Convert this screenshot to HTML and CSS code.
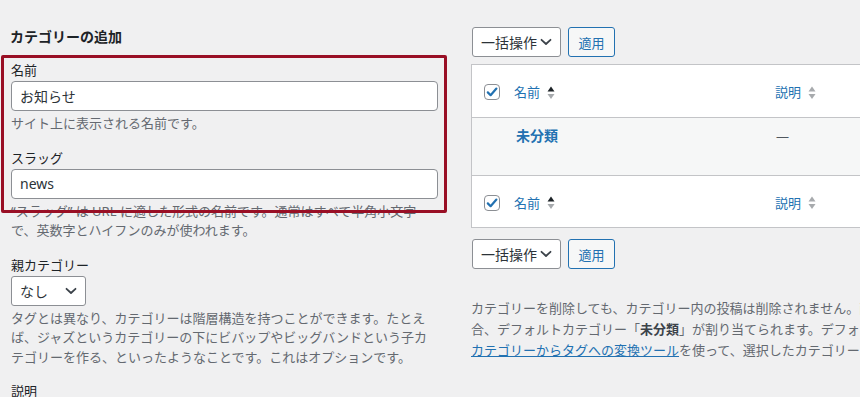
FILE: index.html
```html
<!DOCTYPE html>
<html lang="ja">
<head>
<meta charset="utf-8">
<title>カテゴリー</title>
<link rel="stylesheet" href="styles.css">
</head>
<body>
<div class="page">
  <div class="col-left">
    <h2 class="heading">カテゴリーの追加</h2>
    <div class="highlight-wrap">
      <div class="field">
        <label class="label">名前</label>
        <input class="text-input" type="text" value="お知らせ">
        <p class="help">サイト上に表示される名前です。</p>
      </div>
      <div class="field">
        <label class="label">スラッグ</label>
        <input class="text-input" type="text" value="news">
        <p class="help">“スラッグ” は URL に適した形式の名前です。通常はすべて半角小文字で、英数字とハイフンのみが使われます。</p>
      </div>
      <div class="highlight"></div>
    </div>
    <div class="field">
      <label class="label">親カテゴリー</label>
      <div class="select select-parent">
        <span>なし</span>
        <svg class="chev" width="12" height="8" viewBox="0 0 12 8"><path d="M1.5 1.8 L6 6 L10.5 1.8" fill="none" stroke="#3c434a" stroke-width="1.8" stroke-linecap="round" stroke-linejoin="round"/></svg>
      </div>
      <p class="help">タグとは異なり、カテゴリーは階層構造を持つことができます。たとえば、ジャズというカテゴリーの下にビバップやビッグバンドという子カテゴリーを作る、といったようなことです。これはオプションです。</p>
    </div>
    <div class="field">
      <label class="label">説明</label>
    </div>
  </div>

  <div class="col-right">
    <div class="bulk">
      <div class="select select-bulk">
        <span>一括操作</span>
        <svg class="chev" width="12" height="8" viewBox="0 0 12 8"><path d="M1.5 1.8 L6 6 L10.5 1.8" fill="none" stroke="#3c434a" stroke-width="1.8" stroke-linecap="round" stroke-linejoin="round"/></svg>
      </div>
      <button class="btn">適用</button>
    </div>

    <table class="list">
      <thead>
        <tr>
          <th class="c-check"><span class="cb"><svg width="14" height="14" viewBox="0 0 14 14"><path d="M2.8 7.4 L5.6 10.2 L11.4 3.6" fill="none" stroke="#2271b1" stroke-width="2.2" stroke-linecap="round" stroke-linejoin="round"/></svg></span></th>
          <th class="c-name"><span class="sort-link">名前<svg class="sort" width="8" height="14" viewBox="0 0 8 14"><path d="M0.5 5.5 L4 0.5 L7.5 5.5 Z" fill="#1d2327"/><path d="M0.5 8 L7.5 8 L4 13 Z" fill="#a7aaad"/></svg></span></th>
          <th class="c-desc"><span class="sort-link">説明<svg class="sort" width="8" height="14" viewBox="0 0 8 14"><path d="M0.5 5.5 L4 0.5 L7.5 5.5 Z" fill="#a7aaad"/><path d="M0.5 8 L7.5 8 L4 13 Z" fill="#a7aaad"/></svg></span></th>
        </tr>
      </thead>
      <tbody>
        <tr class="alt">
          <td class="c-check"></td>
          <td class="c-name"><a class="row-title">未分類</a></td>
          <td class="c-desc dash">—</td>
        </tr>
      </tbody>
      <tfoot>
        <tr>
          <th class="c-check"><span class="cb"><svg width="14" height="14" viewBox="0 0 14 14"><path d="M2.8 7.4 L5.6 10.2 L11.4 3.6" fill="none" stroke="#2271b1" stroke-width="2.2" stroke-linecap="round" stroke-linejoin="round"/></svg></span></th>
          <th class="c-name"><span class="sort-link">名前<svg class="sort" width="8" height="14" viewBox="0 0 8 14"><path d="M0.5 5.5 L4 0.5 L7.5 5.5 Z" fill="#1d2327"/><path d="M0.5 8 L7.5 8 L4 13 Z" fill="#a7aaad"/></svg></span></th>
          <th class="c-desc"><span class="sort-link">説明<svg class="sort" width="8" height="14" viewBox="0 0 8 14"><path d="M0.5 5.5 L4 0.5 L7.5 5.5 Z" fill="#a7aaad"/><path d="M0.5 8 L7.5 8 L4 13 Z" fill="#a7aaad"/></svg></span></th>
        </tr>
      </tfoot>
    </table>

    <div class="bulk bulk-bottom">
      <div class="select select-bulk">
        <span>一括操作</span>
        <svg class="chev" width="12" height="8" viewBox="0 0 12 8"><path d="M1.5 1.8 L6 6 L10.5 1.8" fill="none" stroke="#3c434a" stroke-width="1.8" stroke-linecap="round" stroke-linejoin="round"/></svg>
      </div>
      <button class="btn">適用</button>
    </div>

    <p class="note">カテゴリーを削除しても、カテゴリー内の投稿は削除されません。削除したカテゴリーにのみ属していた投稿がある場<br>合、デフォルトカテゴリー「<strong>未分類</strong>」が割り当てられます。デフォルトカテゴリーは削除できません。</p>
    <p class="note note-link"><a class="link">カテゴリーからタグへの変換ツール</a>を使って、選択したカテゴリーをタグに変換できます。</p>
  </div>
</div>
</body>
</html>
```

FILE: styles.css
```css
html, body {
  margin: 0;
  padding: 0;
}
body {
  background: #f0f0f1;
  color: #1d2327;
  font-family: "Noto Sans", "Noto Sans CJK JP", sans-serif;
  font-size: 13px;
  overflow: hidden;
  width: 860px;
  height: 397px;
}
.page {
  display: flex;
  align-items: flex-start;
  width: 1200px;
}
.col-left {
  width: 427px;
  padding-left: 11px;
  flex: none;
}
.heading {
  margin: 27px 0 0 -1px;
  font-size: 14px;
  line-height: 20px;
  font-weight: 700;
  color: #1d2327;
}
.highlight-wrap {
  position: relative;
  margin-top: 14px;
}
.highlight {
  position: absolute;
  left: -10px;
  top: -6px;
  width: 446px;
  height: 158px;
  box-sizing: border-box;
  border: 3px solid #990f25;
  border-radius: 2px;
  pointer-events: none;
}
.field {
  margin-bottom: 15px;
}
.label {
  display: block;
  line-height: 18px;
  margin-bottom: 2px;
  font-size: 13px;
  color: #1d2327;
}
.text-input {
  display: block;
  box-sizing: border-box;
  width: 427px;
  height: 30px;
  margin: 0;
  padding: 0 8px;
  border: 1px solid #8c8f94;
  border-radius: 4px;
  background: #fff;
  font-family: "Noto Sans", "Noto Sans CJK JP", sans-serif;
  font-size: 14px;
  color: #2c3338;
}
.help {
  margin: 3px 0 0;
  width: 420px;
  line-height: 19.5px;
  font-size: 13px;
  color: #646970;
}
.select {
  box-sizing: border-box;
  height: 30px;
  display: flex;
  align-items: center;
  justify-content: space-between;
  padding: 0 8px 0 8px;
  border: 1px solid #8c8f94;
  border-radius: 3px;
  background: #fff;
  font-size: 14px;
  color: #2c3338;
}
.select-parent {
  width: 75px;
  padding-right: 8px;
}
.select-bulk {
  width: 89px;
  padding-right: 8px;
}
.chev {
  flex: none;
}
.col-right {
  margin-left: 33px;
  width: 640px;
  flex: none;
}
.bulk {
  display: flex;
  gap: 7px;
  margin-top: 27px;
  margin-left: 1px;
}
.bulk-bottom {
  margin-top: 11px;
}
.btn {
  box-sizing: border-box;
  height: 30px;
  width: 47px;
  padding: 0;
  border: 1px solid #2271b1;
  border-radius: 3px;
  background: #f6f7f7;
  color: #2271b1;
  font-family: "Noto Sans", "Noto Sans CJK JP", sans-serif;
  font-size: 13px;
}
.list {
  margin-top: 7px;
  width: 640px;
  border-collapse: separate;
  border-spacing: 0;
  border: 1px solid #c3c4c7;
  background: #fff;
  table-layout: fixed;
}
.list th, .list td {
  padding: 0;
  text-align: left;
  font-weight: 400;
  box-sizing: border-box;
}
.list .c-check { width: 32px; }
.list .c-name { width: 261px; }
.list thead th {
  height: 53px;
  padding-top: 2px;
  border-bottom: 1px solid #c3c4c7;
  vertical-align: middle;
}
.list tfoot th {
  height: 52px;
  padding-top: 2px;
  border-top: 1px solid #c3c4c7;
  vertical-align: middle;
}
.list th.c-check {
  padding-left: 12px;
}
.list th.c-name, .list th.c-desc {
  padding-left: 10px;
}
.cb {
  box-sizing: border-box;
  width: 16px;
  height: 16px;
  border: 1px solid #8c8f94;
  border-radius: 4px;
  background: #fff;
  display: flex;
  align-items: center;
  justify-content: center;
}
.sort-link {
  display: inline-flex;
  align-items: center;
  gap: 7px;
  color: #2271b1;
  font-size: 13px;
  line-height: 20px;
}
.sort {
  margin-top: 1px;
}
.list tbody td {
  height: 57px;
  vertical-align: top;
  padding-top: 8px;
  line-height: 20px;
  background: #f6f7f7;
}
.list tbody td.c-name {
  padding-left: 12px;
}
.list tbody td.c-desc {
  padding-left: 11px;
}
.row-title {
  color: #2271b1;
  font-weight: 700;
  font-size: 14px;
}
.dash {
  color: #50575e;
}
.note {
  margin: 29px 0 0;
  white-space: nowrap;
  line-height: 20.5px;
  font-size: 13px;
  color: #646970;
}
.note strong {
  color: #3c434a;
  font-weight: 700;
}
.note-link {
  margin-top: 1px;
}
.link {
  color: #2271b1;
  text-decoration: underline;
}
```
